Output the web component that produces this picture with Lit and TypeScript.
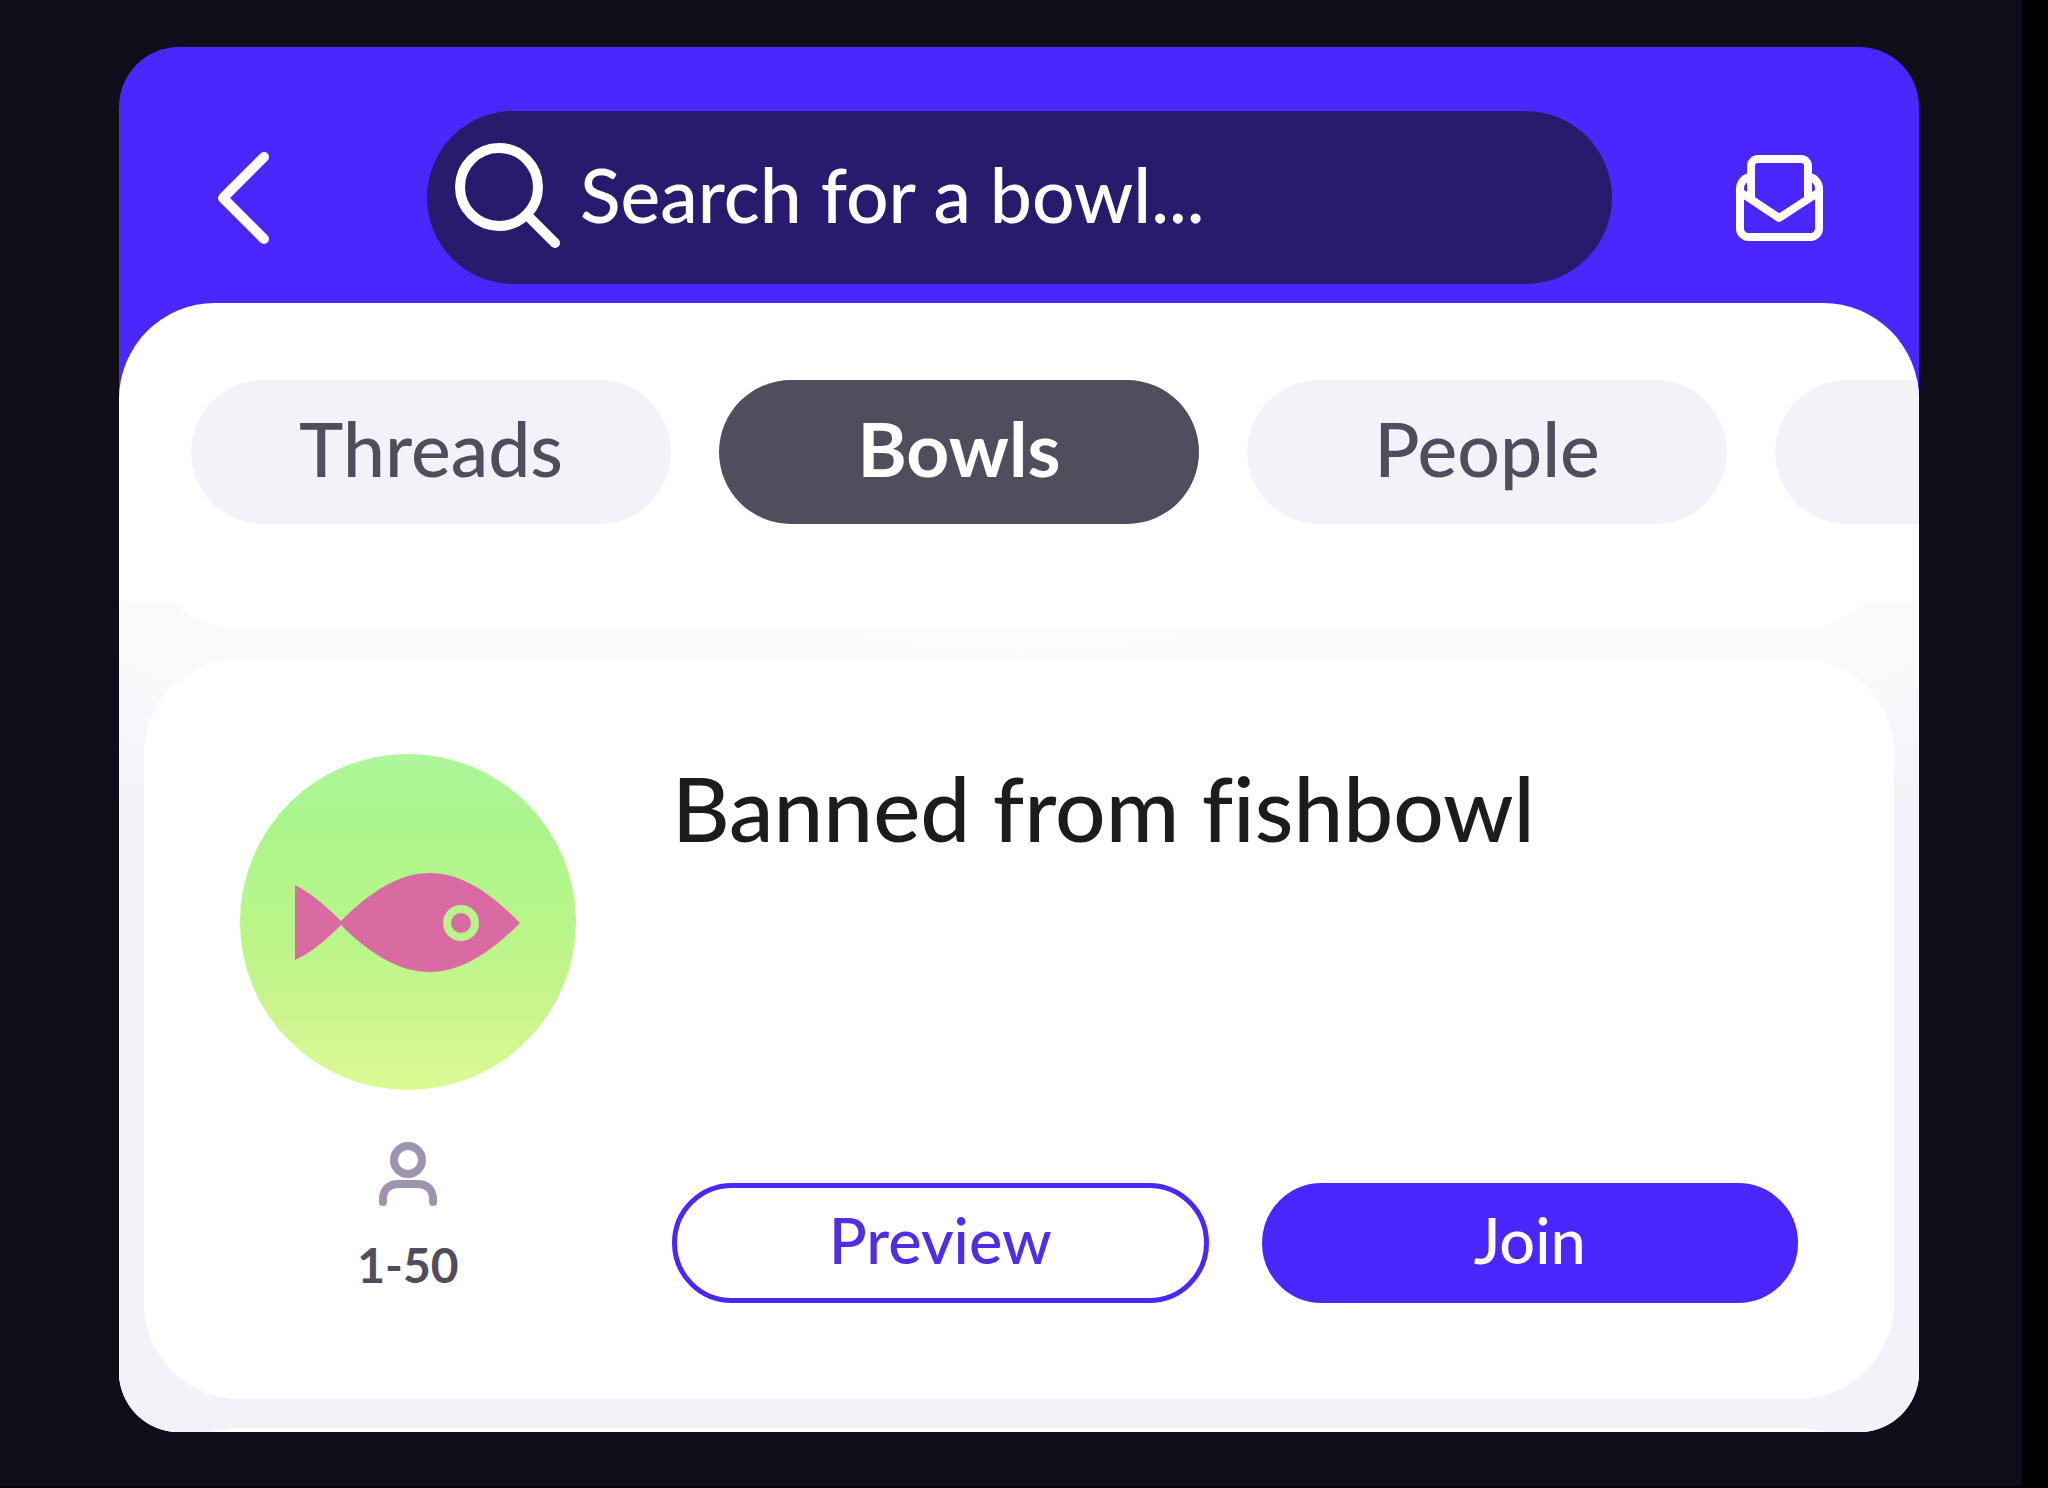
import { LitElement, html, css, svg } from "lit";
import { customElement, property, state } from "lit/decorators.js";

const backIcon = svg`<path d="M46 5 5 46l41 41" />`;
const searchIcon = svg`<circle cx="44" cy="43" r="39" /><path d="M72 71l28 28" />`;
const inboxIcon = svg`
  <path d="M15 43V12a7 7 0 0 1 7-7h43a7 7 0 0 1 7 7v31" />
  <path d="M15 23c-6 0-11 5-11 12v40c0 4 4 8 8 8h63c4 0 8-4 8-8V35c0-7-5-12-11-12" />
  <path d="M4 38l39 26 40-26" />`;

@customElement("fish-avatar")
class FishAvatar extends LitElement {
  static styles = css`
    :host {
      display: block;
    }
    .disc {
      display: block;
      width: 100%;
      border-radius: 50%;
      background: linear-gradient(#aef69c 0%, #abf58c 20%, #b2f68a 36%, #bdf58a 60%, #ccf590 78%, #dcfa94 100%);
    }
    .fish {
      fill: #d96ba2;
    }
    .eye {
      fill: none;
      stroke: #b9f589;
      stroke-width: 8;
    }
  `;
  render() {
    return html`<svg class="disc" viewBox="0 0 336 336" role="img" aria-label="Bowl avatar">
      <path
        class="fish"
        d="M55 131C71 139 86 152 101 167C131 137 160 119 190 119C220 119 249 137 280 169C249 200 220 218 190 218C160 218 131 201 101 171C86 186 71 199 55 206Z"
      />
      <circle class="eye" cx="221" cy="169" r="14" />
    </svg>`;
  }
}

@customElement("bowl-card")
class BowlCard extends LitElement {
  @property() name = "";
  @property() members = "";

  static styles = css`
    :host {
      display: block;
    }
    .card {
      display: grid;
      grid-template-columns: 336px 1fr;
      column-gap: 96px;
      padding: 96px;
      border-radius: 96px;
      background: #fff;
    }
    .side {
      display: flex;
      flex-direction: column;
      align-items: center;
      padding-bottom: 8px;
    }
    .avatar {
      width: 100%;
    }
    .person {
      width: 60px;
      height: 66px;
      margin-top: 50px;
      fill: none;
      stroke: #9e94ae;
      stroke-width: 8;
      stroke-linecap: round;
    }
    .members {
      margin: 29px 0 0;
      font-size: 48px;
      line-height: 60px;
      font-weight: 700;
      color: #504d5c;
    }
    .main {
      display: flex;
      flex-direction: column;
      justify-content: space-between;
    }
    .title {
      margin: 0;
      font-size: 89px;
      line-height: 108px;
      font-weight: 500;
      font-variant-ligatures: none;
      color: #1c1c1e;
    }
    .actions {
      display: grid;
      grid-template-columns: 1fr 1fr;
      gap: 53px;
    }
    .action {
      height: 120px;
      box-sizing: border-box;
      padding: 0 0 8px;
      border: 5px solid #4b27ff;
      border-radius: 60px;
      background: #fff;
      color: #4f2fe6;
      font: inherit;
      font-size: 63px;
      font-weight: 500;
    }
    .primary {
      background: #4b27ff;
      color: #fff;
    }
  `;

  render() {
    return html`<article class="card">
      <div class="side">
        <fish-avatar class="avatar"></fish-avatar>
        <svg class="person" viewBox="0 0 60 66" aria-hidden="true">
          <circle cx="30" cy="20" r="14" />
          <path d="M5 62v-3c0-9 6-15 15-15h20c9 0 15 6 15 15v3" />
        </svg>
        <p class="members">${this.members}</p>
      </div>
      <div class="main">
        <h2 class="title">${this.name}</h2>
        <div class="actions">
          <button class="action" type="button">Preview</button>
          <button class="action primary" type="button">Join</button>
        </div>
      </div>
    </article>`;
  }
}

@customElement("app-root")
class AppRoot extends LitElement {
  @state() private tab = "Bowls";

  static styles = css`
    :host {
      display: block;
      box-sizing: border-box;
      min-height: 100vh;
      padding: 47px 103px 54px 119px;
      border-right: 26px solid #000;
      border-bottom: 2px solid #000;
      background: #0f0d1a;
      font-family: Lato, "Open Sans", sans-serif;
    }
    .panel {
      overflow: hidden;
      border-radius: 60px;
      background: #4b27ff;
    }
    .header {
      display: flex;
      align-items: center;
      padding: 64px 96px 19px 99px;
    }
    .icon-button {
      display: flex;
      padding: 0;
      border: 0;
      background: none;
    }
    .icon {
      flex: none;
      overflow: visible;
      fill: none;
      stroke: #fff;
      stroke-linecap: round;
      stroke-linejoin: round;
    }
    .back {
      width: 51px;
      height: 92px;
      stroke-width: 10;
    }
    .inbox {
      width: 87px;
      height: 87px;
      stroke-width: 8;
    }
    .search {
      display: flex;
      flex: 1;
      align-items: center;
      gap: 20px;
      height: 173px;
      box-sizing: border-box;
      margin: 0 124px 0 158px;
      padding: 0 28px;
      border-radius: 87px;
      background: #281a6c;
    }
    .glass {
      width: 105px;
      height: 108px;
      stroke-width: 10;
    }
    .field {
      flex: 1;
      min-width: 0;
      height: 100px;
      padding: 0 0 8px;
      border: 0;
      outline: 0;
      background: none;
      font: inherit;
      font-size: 75px;
      font-weight: 500;
      color: #fff;
    }
    .field::placeholder {
      color: #fff;
      opacity: 1;
    }
    .sheet {
      overflow: hidden;
      border-radius: 96px 96px 0 0;
      background: #fff;
    }
    .tabs {
      display: flex;
      gap: 48px;
      padding: 77px 0 77px 72px;
    }
    .tab {
      flex: none;
      width: 480px;
      height: 144px;
      padding: 0 0 8px;
      border: 0;
      border-radius: 72px;
      background: #f2f3f8;
      font: inherit;
      font-size: 75px;
      font-weight: 500;
      color: #504d5c;
    }
    .tab[aria-selected="true"] {
      background: #504d5c;
      color: #fff;
      font-weight: 700;
    }
    .feed {
      display: flex;
      flex-direction: column;
      gap: 29px;
      padding: 0 25px;
      background: radial-gradient(ellipse 72% 280px at 50% 0, #fcfcfe 0%, #fafafd 70%, #f2f3f8 100%) #f2f3f8;
    }
    .peek {
      display: flex;
      overflow: hidden;
    }
    .peek-above {
      height: 28px;
      align-items: flex-end;
    }
    .peek-below {
      height: 4px;
      align-items: flex-start;
    }
    .blank {
      flex: 1;
      height: 200px;
      border-radius: 96px;
      background: #fff;
    }
  `;

  private renderTab(label: string, hiddenLabel = "") {
    return html`<button
      class="tab"
      type="button"
      role="tab"
      aria-label=${label || hiddenLabel}
      aria-selected=${label === this.tab ? "true" : "false"}
      @click=${() => (this.tab = label || this.tab)}
    >
      ${label}
    </button>`;
  }

  render() {
    return html`<main class="panel">
      <header class="header">
        <button class="icon-button" type="button" aria-label="Back">
          <svg class="icon back" viewBox="0 0 51 92">${backIcon}</svg>
        </button>
        <label class="search">
          <svg class="icon glass" viewBox="0 0 105 108" aria-hidden="true">${searchIcon}</svg>
          <input class="field" type="text" aria-label="Search for a bowl" placeholder="Search for a bowl..." />
        </label>
        <button class="icon-button" type="button" aria-label="Inbox">
          <svg class="icon inbox" viewBox="0 0 87 87">${inboxIcon}</svg>
        </button>
      </header>
      <section class="sheet">
        <div class="tabs" role="tablist">
          ${["Threads", "Bowls", "People"].map((t) => this.renderTab(t))} ${this.renderTab("", "More")}
        </div>
        <div class="feed">
          <div class="peek peek-above"><div class="blank"></div></div>
          <bowl-card name="Banned from fishbowl" members="1-50"></bowl-card>
          <div class="peek peek-below"><div class="blank"></div></div>
        </div>
      </section>
    </main>`;
  }
}
